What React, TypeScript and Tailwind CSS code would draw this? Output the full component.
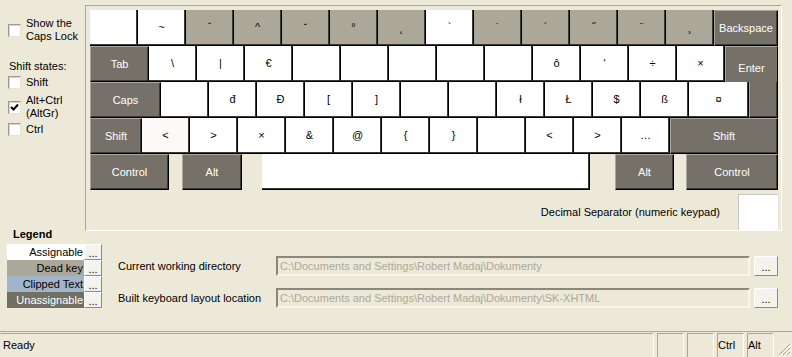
import clsx from "clsx";

type Kind = "a" | "s" | "d" | "u";

type KeyDef = { l?: string; k: Kind; w: string; x?: string };

const kindCls: Record<Kind, string> = {
  a: "bg-white text-black",
  s: "bg-[#fcf9f6] text-black",
  d: "bg-[#aca899] text-black",
  u: "bg-[#767168] text-white border-t border-l border-t-[#a9a69c] border-l-[#a9a69c]",
};

const a = (l = ""): KeyDef => ({ l, k: "a", w: "w-[48px]" });
const d = (l: string): KeyDef => ({ l, k: "d", w: "w-[48px]" });

const rows: KeyDef[][] = [
  [
    a(),
    a("~"),
    d("ˇ"),
    d("^"),
    d("˘"),
    d("°"),
    d("˛"),
    a("`"),
    d("˙"),
    d("´"),
    d("˝"),
    d("¨"),
    d("¸"),
    { l: "Backspace", k: "u", w: "w-[64px]" },
  ],
  [
    { l: "Tab", k: "u", w: "w-[59px]" },
    a("\\"),
    a("|"),
    a("€"),
    a(),
    a(),
    a(),
    a(),
    a(),
    a("ô"),
    a("'"),
    a("÷"),
    a("×"),
    { l: "Enter", k: "u", w: "w-[53px]", x: "items-start pt-[15px] !border-b-0 !shadow-none" },
  ],
  [
    { l: "Caps", k: "u", w: "w-[71px]" },
    a(),
    a("đ"),
    a("Đ"),
    a("["),
    a("]"),
    a(),
    a(),
    a("ł"),
    a("Ł"),
    a("$"),
    a("ß"),
    { l: "¤", k: "a", w: "w-[60px]" },
    { k: "u", w: "w-[29px]", x: "!border-t-0" },
  ],
  [
    { l: "Shift", k: "u", w: "w-[52px]" },
    { l: "<", k: "s", w: "w-[48px]" },
    a(">"),
    a("×"),
    a("&"),
    a("@"),
    a("{"),
    a("}"),
    a(),
    a("<"),
    a(">"),
    a("…"),
    { l: "Shift", k: "u", w: "w-[108px]" },
  ],
  [
    { l: "Control", k: "u", w: "w-[79px]" },
    { l: "Alt", k: "u", w: "w-[60px]", x: "ml-[13px]" },
    { k: "a", w: "w-[328px]", x: "ml-[20px]" },
    { l: "Alt", k: "u", w: "w-[59px]", x: "ml-[25px]" },
    { l: "Control", k: "u", w: "w-[92px]", x: "ml-[12px]" },
  ],
];

const Key = ({ k }: { k: KeyDef }) => (
  <div
    className={clsx(
      "flex h-[36px] shrink-0 justify-center items-center border-r border-b border-r-black border-b-black shadow-[inset_-1px_-1px_0_#3a3a3a]",
      kindCls[k.k],
      k.w,
      k.x
    )}
  >
    {k.l}
  </div>
);

const Check = ({ on }: { on?: boolean }) => (
  <div className="flex h-[13px] w-[13px] shrink-0 items-center justify-center border border-t-[#9d9a8e] border-l-[#9d9a8e] border-r-[#e6e3d6] border-b-[#e6e3d6] bg-white shadow-[inset_1px_1px_0_#d8d5c8]">
    {on && (
      <svg width="9" height="9" viewBox="0 0 9 9">
        <path d="M1 4 L3.5 6.5 L8 1.5" stroke="#000" strokeWidth="2" fill="none" />
      </svg>
    )}
  </div>
);

const SmallBtn = ({ className }: { className: string }) => (
  <div
    className={clsx(
      "flex items-end justify-center pb-[2px] border border-t-white border-l-white border-r-[#8d8b80] border-b-[#8d8b80] bg-[#f4f3ee] text-black leading-[8px]",
      className
    )}
  >
    ...
  </div>
);

const legend = [
  { l: "Assignable", c: "bg-white text-black" },
  { l: "Dead key", c: "bg-[#aca899] text-black" },
  { l: "Clipped Text", c: "bg-[#a0b5c9] text-black" },
  { l: "Unassignable", c: "bg-[#716f64] text-white" },
];

const paths = [
  { label: "Current working directory", value: "C:\\Documents and Settings\\Robert Madaj\\Dokumenty" },
  { label: "Built keyboard layout location", value: "C:\\Documents and Settings\\Robert Madaj\\Dokumenty\\SK-XHTML" },
];

export default function App() {
  return (
    <div className="flex h-[357px] w-[792px] flex-col overflow-hidden bg-[#ece9d8] font-['Liberation_Sans',Arial,sans-serif] text-[11px] leading-[13px] text-black">
      {/* keyboard area */}
      <div className="flex h-[231px] shrink-0">
        <div className="flex w-[85px] shrink-0 flex-col pl-[8px] pt-[17px]">
          <div className="flex items-center gap-[5px]">
            <Check />
            <div>
              Show the
              <br />
              Caps Lock
            </div>
          </div>
          <div className="mt-[17px] pl-[1px]">Shift states:</div>
          <div className="mt-[3px] flex items-center gap-[5px]">
            <Check />
            <span>Shift</span>
          </div>
          <div className="mt-[5px] flex items-center gap-[5px]">
            <Check on />
            <div>
              Alt+Ctrl
              <br />
              (AltGr)
            </div>
          </div>
          <div className="mt-[3px] flex items-center gap-[5px]">
            <Check />
            <span>Ctrl</span>
          </div>
        </div>

        <div className="mt-[5px] h-[226px] w-[697px] shrink-0 border border-t-[#aca899] border-l-[#aca899] border-r-white border-b-white pl-[4px] pt-[4px]">
          <div className="flex w-[688px] flex-col">
            {rows.map((row, i) => (
              <div key={i} className="flex">
                {row.map((k, j) => (
                  <Key key={j} k={k} />
                ))}
              </div>
            ))}
          </div>
          <div className="mt-[4px] flex w-[688px] items-center justify-end gap-[18px]">
            <span>Decimal Separator (numeric keypad)</span>
            <div className="h-[36px] w-[40px] border-t border-l border-[#c9c6ba] border-r-0 border-b-0 bg-white" />
          </div>
        </div>
      </div>

      {/* legend + paths */}
      <div className="flex h-[100px] shrink-0">
        <div className="flex w-[118px] shrink-0 flex-col pl-[7px]">
          <div className="-mt-[3px] pl-[6px] font-bold">Legend</div>
          <div className="mt-[3px] flex flex-col">
            {legend.map((g) => (
              <div key={g.l} className="flex h-[16px]">
                <div className={clsx("flex w-[77px] items-center justify-end pr-[1px]", g.c)}>{g.l}</div>
                <SmallBtn className="h-[16px] w-[18px]" />
              </div>
            ))}
          </div>
        </div>
        <div className="mt-[25px] flex flex-col gap-[12px]">
          {paths.map((p) => (
            <div key={p.label} className="flex h-[20px] items-center">
              <div className="w-[158px]">{p.label}</div>
              <div className="flex h-[20px] w-[474px] items-center overflow-hidden whitespace-nowrap border-2 border-t-[#8a877c] border-l-[#8a877c] border-r-[#f6f5f0] border-b-[#f6f5f0] pl-[2px] text-[#aca899]">
                {p.value}
              </div>
              <SmallBtn className="ml-[4px] h-[20px] w-[24px] pb-[4px]" />
            </div>
          ))}
        </div>
      </div>

      {/* status bar */}
      <div className="flex h-[26px] shrink-0 gap-[3px] border-t border-t-[#aca899] pt-[1px]">
        <div className="flex h-[25px] w-[654px] items-center border border-t-[#aca899] border-l-[#ece9d8] border-r-white border-b-white pl-[2px]">
          Ready
        </div>
        <div className="h-[25px] w-[27px] border border-t-[#aca899] border-l-[#aca899] border-r-white border-b-white" />
        <div className="h-[25px] w-[27px] border border-t-[#aca899] border-l-[#aca899] border-r-white border-b-white" />
        <div className="flex h-[25px] w-[27px] items-center border border-t-[#aca899] border-l-[#aca899] border-r-white border-b-white">
          Ctrl
        </div>
        <div className="flex h-[25px] w-[27px] items-center border border-t-[#aca899] border-l-[#aca899] border-r-white border-b-white">
          Alt
        </div>
        <div className="relative flex-1">
          <svg className="absolute bottom-[1px] right-[1px]" width="13" height="13" viewBox="0 0 13 13">
            <path d="M12 1 L1 12 M12 5 L5 12 M12 9 L9 12" stroke="#aca899" strokeWidth="1" />
            <path d="M13 2 L2 13 M13 6 L6 13 M13 10 L10 13" stroke="#ffffff" strokeWidth="1" />
          </svg>
        </div>
      </div>
    </div>
  );
}
